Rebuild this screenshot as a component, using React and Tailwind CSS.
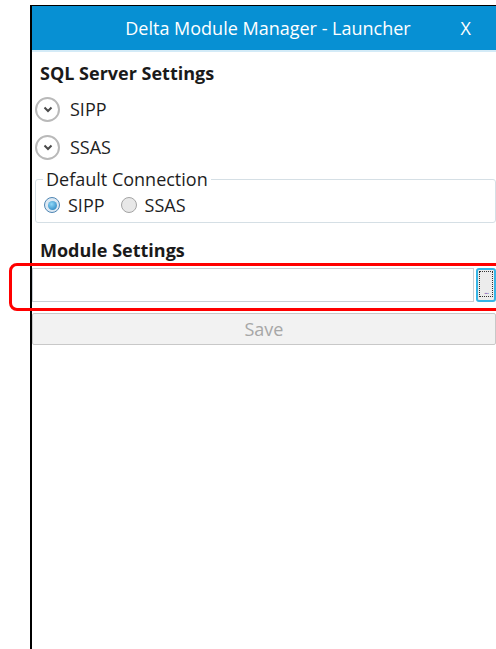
import React from "react";

const font = { fontFamily: '"Open Sans", "Noto Sans", sans-serif' };

function Expander({ label }) {
  return (
    <div className="flex items-center h-[38px]">
      <span className="shrink-0 ml-[3px] w-[25px] h-[25px] rounded-full border-2 border-[#b9b9b9] bg-white flex items-center justify-center">
        <svg width="10" height="7" viewBox="0 0 10 7">
          <path d="M1.5 1.5 L5 5 L8.5 1.5" fill="none" stroke="#4a4a4a" strokeWidth="2" />
        </svg>
      </span>
      <span className="ml-[10px] text-[18px] leading-[24px] text-[#1e1e1e]">{label}</span>
    </div>
  );
}

function Radio({ checked, label }) {
  return (
    <label className="flex items-center gap-[8px]">
      <span
        className={`shrink-0 w-[16px] h-[16px] rounded-full border flex items-center justify-center ${
          checked ? "border-[#4f86b4] bg-[#dde9f3]" : "border-[#a4a4a4] bg-[#e8e8e8]"
        }`}
      >
        {checked && (
          <span className="w-[9px] h-[9px] rounded-full bg-[radial-gradient(circle_at_40%_35%,#8fd8f8,#1a78b8)]" />
        )}
      </span>
      <span className="text-[18px] leading-[24px] text-[#1e1e1e]">{label}</span>
    </label>
  );
}

export default function App() {
  return (
    <div className="relative w-[496px] h-[649px] bg-white overflow-hidden" style={font}>
      <div className="ml-[30px] mt-[5px] h-[644px] border-l-2 border-t border-black flex flex-col">
        <div className="relative h-[44px] shrink-0 bg-[#0790d3] flex items-center justify-center text-white text-[18px]">
          <span className="ml-[8px]">Delta Module Manager - Launcher</span>
          <span className="absolute right-[25px]">X</span>
        </div>
        <div className="h-[2px] shrink-0 bg-[#d4ebf7]" />

        <div className="pt-[9px]">
          <h2 className="ml-[8px] text-[18px] font-bold text-[#1a1a1a] leading-[24px]">SQL Server Settings</h2>
          <div className="mt-[5px]">
            <Expander label="SIPP" />
            <Expander label="SSAS" />
          </div>

          <fieldset className="ml-[3px] mt-[2px] border border-[#d5dfe5] rounded-[3px] pl-[8px] pb-[5px]">
            <legend className="px-[3px] -ml-[1px] text-[18px] text-[#1e1e1e] leading-[22px]">
              Default Connection
            </legend>
            <div className="flex items-center gap-[16px] pt-[3px]">
              <Radio checked label="SIPP" />
              <Radio label="SSAS" />
            </div>
          </fieldset>

          <h2 className="ml-[8px] mt-[15px] text-[18px] font-bold text-[#1a1a1a] leading-[24px]">Module Settings</h2>

          <div className="mt-[6px] flex h-[34px]">
            <div className="flex-1 border border-[#c9ced4] bg-white" />
            <button
              type="button"
              className="ml-[2px] w-[20px] h-[34px] rounded-[3px] border-2 border-[#35b5e6] bg-[#ececec] flex items-end justify-center pb-[3px]"
            >
              <span className="w-[14px] h-[26px] border border-dotted border-[#333] flex items-end justify-center text-[9px] leading-[10px] tracking-[-1px] text-[#7a4fb0]">
                ...
              </span>
            </button>
          </div>

          <button
            type="button"
            className="mt-[11px] w-full h-[32px] rounded-[2px] border border-[#c8c8c8] bg-[#f2f2f2] text-[18px] text-[#a7a7a7]"
          >
            Save
          </button>
        </div>
      </div>

      <div className="absolute left-[9px] top-[263px] w-[500px] h-[48px] rounded-[8px] border-[3px] border-[#ff0000]" />
    </div>
  );
}
